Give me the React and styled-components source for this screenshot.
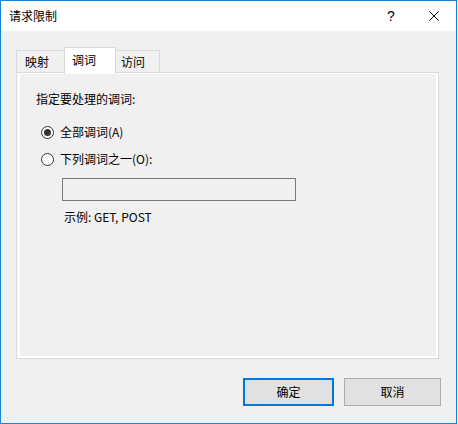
import React from "react";
import styled, { createGlobalStyle } from "styled-components";

const Global = createGlobalStyle`
  html, body { margin: 0; padding: 0; background: #ffffff; }
  body { font-family: "Noto Sans CJK SC", "Noto Sans", sans-serif; font-size: 12px; color: #000; }
  * { box-sizing: border-box; }
`;

const Window = styled.div`
  width: 457px;
  height: 424px;
  border: 1px solid #1883d7;
  background: #f0f0f0;
  display: flex;
  flex-direction: column;
`;

const TitleBar = styled.div`
  height: 30px;
  background: #ffffff;
  display: flex;
  align-items: center;
  padding-left: 8px;
  flex-shrink: 0;
`;

const Title = styled.div`
  flex: 1;
  line-height: 16px;
  margin-top: -1px;
`;

const HelpBtn = styled.div`
  width: 22px;
  font-family: "Liberation Sans", sans-serif;
  font-size: 14px;
  line-height: 16px;
  margin-right: 20px;
  margin-top: -1px;
`;

const CloseBtn = styled.div`
  width: 10px;
  height: 10px;
  margin-right: 17px;
  display: flex;
`;

const Body = styled.div`
  flex: 1;
  display: flex;
  flex-direction: column;
  padding: 16px 0 0 15px;
`;

const TabStrip = styled.div`
  display: flex;
  align-items: flex-end;
  height: 25px;
`;

const Tab = styled.div`
  position: relative;
  width: ${(p) => p.$w}px;
  height: ${(p) => (p.$active ? 27 : 22)}px;
  margin-bottom: ${(p) => (p.$active ? -2 : 0)}px;
  margin-right: -1px;
  padding-left: ${(p) => p.$pl}px;
  border: 1px solid #d9d9d9;
  border-bottom: none;
  background: ${(p) => (p.$active ? "#ffffff" : "#f0f0f0")};
  z-index: ${(p) => (p.$active ? 2 : 1)};
  display: flex;
  align-items: ${(p) => (p.$active ? "flex-start" : "center")};
  padding-top: ${(p) => (p.$active ? 4 : 1)}px;
  line-height: 16px;
`;

const Panel = styled.div`
  width: 423px;
  height: 287px;
  border: 1px solid #d9d9d9;
  background: #ffffff;
  padding: 1px 2px 2px 3px;
  display: flex;
  position: relative;
  z-index: 1;
`;

const Page = styled.div`
  flex: 1;
  background: #f0f0f0;
  display: flex;
  flex-direction: column;
  padding: 17px 0 0 16px;
`;

const Label = styled.div`
  line-height: 16px;
`;

const RadioRow = styled.label`
  display: flex;
  align-items: center;
  height: 16px;
  margin-top: ${(p) => p.$mt}px;
  margin-left: 5px;
  line-height: 16px;
`;

const RadioCircle = styled.span`
  width: 13px;
  height: 13px;
  border-radius: 50%;
  border: 1px solid #333333;
  background: #ffffff;
  display: flex;
  align-items: center;
  justify-content: center;
  margin-right: 6px;
  &::after {
    content: "";
    width: 7px;
    height: 7px;
    border-radius: 50%;
    background: ${(p) => (p.$checked ? "#333333" : "transparent")};
  }
`;

const Input = styled.div`
  width: 234px;
  height: 23px;
  margin: 11px 0 0 26px;
  border: 1px solid #7a7a7a;
  background: #f0f0f0;
`;

const Example = styled.div`
  margin: 8px 0 0 28px;
  line-height: 16px;
`;

const ButtonRow = styled.div`
  display: flex;
  justify-content: flex-end;
  gap: 10px;
  margin-top: 19px;
  padding-right: 15px;
`;

const Button = styled.div`
  width: ${(p) => p.$w}px;
  height: 28px;
  background: #e1e1e1;
  border: ${(p) => (p.$primary ? "2px solid #0078d7" : "1px solid #adadad")};
  display: flex;
  align-items: center;
  justify-content: center;
  line-height: 16px;
`;

export default function App() {
  return (
    <>
      <Global />
      <Window>
        <TitleBar>
          <Title>请求限制</Title>
          <HelpBtn>?</HelpBtn>
          <CloseBtn>
            <svg width="10" height="10" viewBox="0 0 10 10">
              <path d="M0.5 0.5 L9.5 9.5 M9.5 0.5 L0.5 9.5" stroke="#000" strokeWidth="1" fill="none" />
            </svg>
          </CloseBtn>
        </TitleBar>
        <Body>
          <TabStrip>
            <Tab $w={49} $pl={8}>映射</Tab>
            <Tab $w={52} $pl={7} $active>调词</Tab>
            <Tab $w={45} $pl={5}>访问</Tab>
          </TabStrip>
          <Panel>
            <Page>
              <Label>指定要处理的调词:</Label>
              <RadioRow $mt={17}>
                <RadioCircle $checked />
                全部调词(A)
              </RadioRow>
              <RadioRow $mt={11}>
                <RadioCircle />
                下列调词之一(O):
              </RadioRow>
              <Input />
              <Example>示例: GET, POST</Example>
            </Page>
          </Panel>
          <ButtonRow>
            <Button $w={91} $primary>确定</Button>
            <Button $w={97}>取消</Button>
          </ButtonRow>
        </Body>
      </Window>
    </>
  );
}
